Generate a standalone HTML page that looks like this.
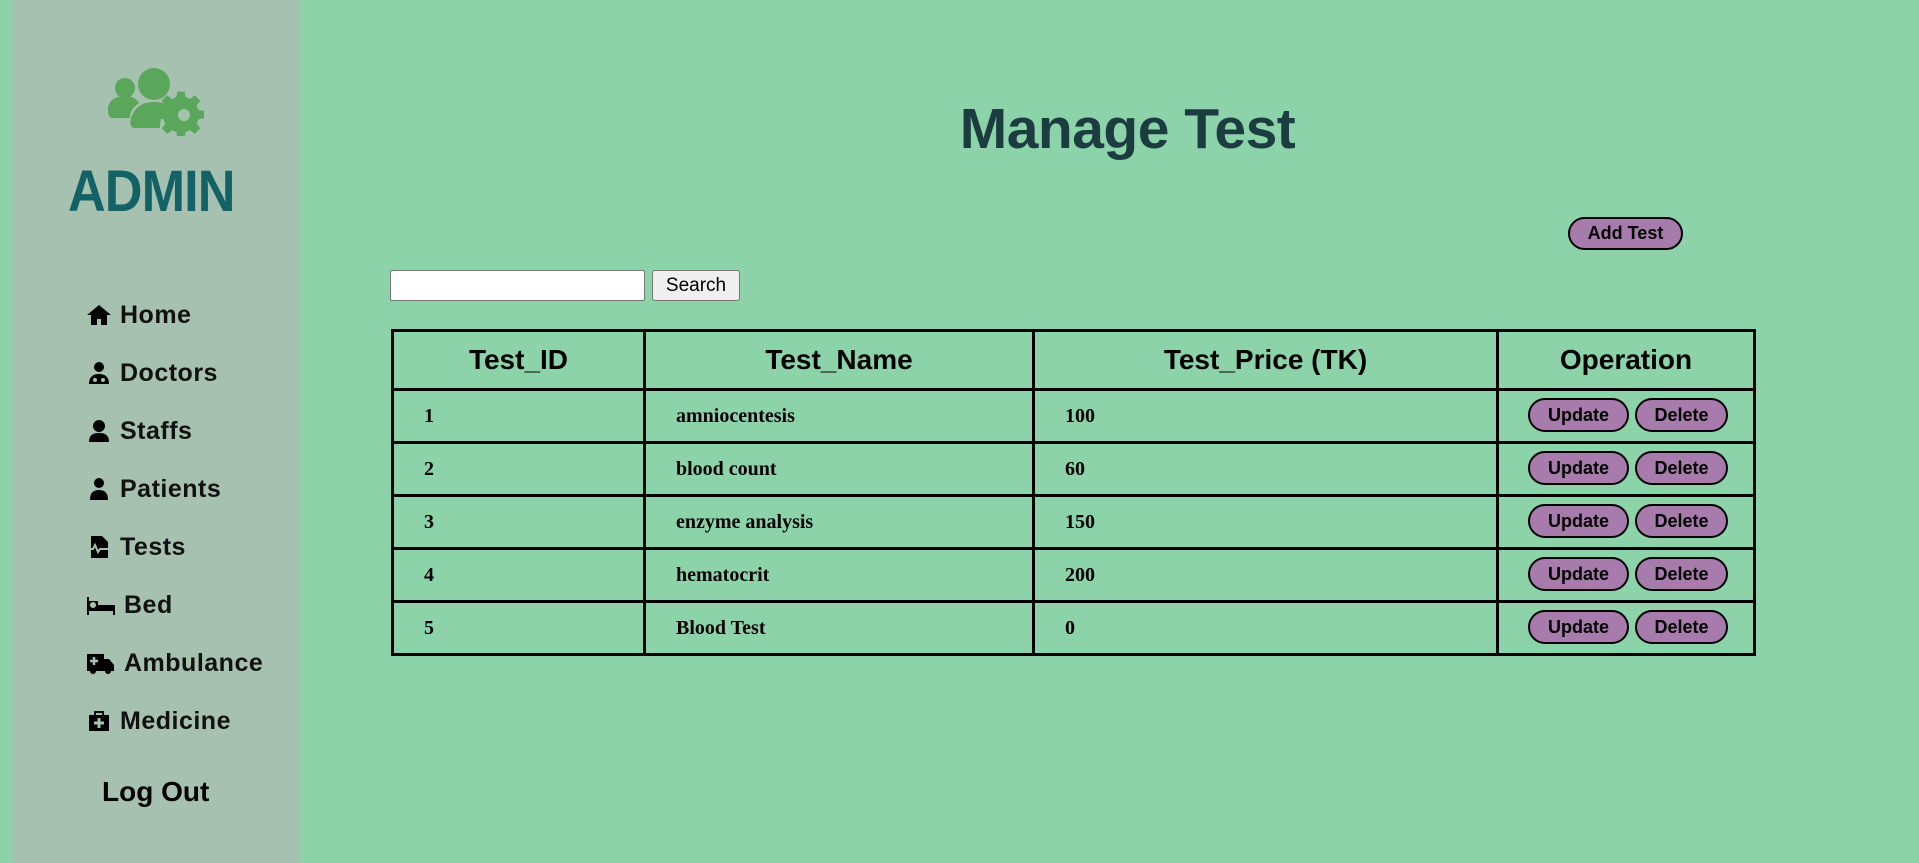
<!DOCTYPE html>
<html><head><meta charset="utf-8"><style>
*{margin:0;padding:0;box-sizing:border-box}
body{width:1919px;height:863px;background:#8dd3aa;position:relative;overflow:hidden;font-family:"Liberation Sans",sans-serif}
.side{position:absolute;left:12px;top:0;width:288px;height:863px;background:#a6c1af}
.abs{position:absolute}
.menu{position:absolute;left:86px;font-size:25px;font-weight:bold;color:#111;letter-spacing:0.5px;display:flex;align-items:center;height:30px}
.menu svg{width:26px;height:26px;margin-right:8px}
.btn{position:absolute;background:#a77bab;border:2px solid #000;border-radius:18px;font-weight:bold;font-size:18px;text-align:center;color:#000}
table{position:absolute;left:391px;top:329px;width:1365px;border-collapse:collapse}
td,th{border:3px solid #000}
th{height:59px;font-size:28px;font-weight:bold;font-family:"Liberation Sans",sans-serif}
td{height:53px;font-family:"Liberation Serif",serif;font-weight:bold;font-size:20px;padding-left:30px}
td.op{padding:0;position:relative}
</style></head><body>
<div class="side"></div>
<svg class="abs" style="left:108px;top:68px" width="96" height="68" viewBox="0 0 96 68">
<g fill="#5aa65a"><circle cx="17" cy="20" r="10"/><path d="M0 42c0-10 8-14 17-14s12 4 14 7c-6 4-9 9-9 15H4c-2 0-4-3-4-8z"/>
<circle cx="46" cy="16" r="16"/><path d="M22 60c0-18 10-26 24-26 9 0 14 2 17 6-8 4-11 10-11 20H26c-2 0-4-3-4-8z"/>
<path d="M71 30h8l1 6 5 2 5-4 6 6-4 5 2 5 6 1v8l-6 1-2 5 4 5-6 6-5-4-5 2-1 6h-8l-1-6-5-2-5 4-6-6 4-5-2-5-6-1v-8l6-1 2-5-4-5 6-6 5 4 5-2z" transform="translate(4,-4) scale(0.92)"/></g>
<circle cx="76" cy="47" r="6" fill="#a6c1af"/></svg>
<div class="abs" style="left:68px;top:158px;font-size:58px;font-weight:bold;color:#136265;letter-spacing:-1px;transform:scaleX(0.9);transform-origin:left">ADMIN</div>

<div class="menu" style="top:300px"><svg viewBox="0 0 26 24"><path d="M13 2L1 12h4v10h6v-6h4v6h6V12h4z"/></svg>Home</div>
<div class="menu" style="top:358px"><svg viewBox="0 0 26 24"><circle cx="13" cy="6" r="5"/><path d="M3 23c0-7 4-10 10-10s10 3 10 10z"/><circle cx="9" cy="19" r="2" fill="#a6c1af"/><circle cx="17" cy="19" r="2" fill="#a6c1af"/></svg>Doctors</div>
<div class="menu" style="top:416px"><svg viewBox="0 0 26 24"><circle cx="13" cy="7" r="6"/><path d="M3 23c0-7 4-9 10-9s10 2 10 9z"/></svg>Staffs</div>
<div class="menu" style="top:474px"><svg viewBox="0 0 26 24"><circle cx="13" cy="6" r="5"/><path d="M4 23c0-7 3-10 9-10s9 3 9 10z"/></svg>Patients</div>
<div class="menu" style="top:532px"><svg viewBox="0 0 26 24"><path d="M5 1h11l6 6v16H5z"/><path d="M1 14h6l2-4 3 7 2-3h8" stroke="#a6c1af" stroke-width="2" fill="none"/></svg>Tests</div>
<div class="menu" style="top:590px"><svg viewBox="0 0 30 24" style="width:30px"><path d="M1 4v18h2v-4h24v4h2V12H12V8H3V4z"/><circle cx="7" cy="12" r="3" fill="#a6c1af"/></svg>Bed</div>
<div class="menu" style="top:648px"><svg viewBox="0 0 30 24" style="width:30px"><path d="M1 3h17v5h5l5 6v6H1z"/><circle cx="7" cy="20" r="3"/><circle cx="22" cy="20" r="3"/><path d="M8 6v8M4 10h8" stroke="#a6c1af" stroke-width="2.5"/></svg>Ambulance</div>
<div class="menu" style="top:706px"><svg viewBox="0 0 26 24"><path d="M3 6h20v16H3z"/><path d="M9 6V3h8v3" stroke="#111" stroke-width="2" fill="none"/><path d="M13 9v10M8 14h10" stroke="#a6c1af" stroke-width="3"/></svg>Medicine</div>
<div class="abs" style="left:102px;top:776px;font-size:28px;font-weight:bold;color:#000;letter-spacing:0">Log Out</div>

<div class="abs" style="left:940px;top:96px;width:375px;text-align:center;font-size:57px;font-weight:bold;color:#1c3d40;letter-spacing:-0.5px">Manage Test</div>
<div class="btn" style="left:1568px;top:217px;width:115px;height:33px;line-height:29px">Add Test</div>

<div class="abs" style="left:390px;top:270px;width:255px;height:31px;background:#fff;border:1px solid #767676;border-radius:2px"></div>
<div class="abs" style="left:652px;top:270px;width:88px;height:31px;background:#efefef;border:1px solid #767676;border-radius:3px;font-size:19px;text-align:center;line-height:29px">Search</div>

<table>
<tr><th style="width:252px">Test_ID</th><th style="width:389px">Test_Name</th><th style="width:464px">Test_Price (TK)</th><th>Operation</th></tr>
<tr><td>1</td><td>amniocentesis</td><td>100</td><td class="op"></td></tr>
<tr><td>2</td><td>blood count</td><td>60</td><td class="op"></td></tr>
<tr><td>3</td><td>enzyme analysis</td><td>150</td><td class="op"></td></tr>
<tr><td>4</td><td>hematocrit</td><td>200</td><td class="op"></td></tr>
<tr><td>5</td><td>Blood Test</td><td>0</td><td class="op"></td></tr>
</table>
<div class="btn" style="left:1528px;top:398px;width:101px;height:34px;line-height:30px">Update</div><div class="btn" style="left:1635px;top:398px;width:93px;height:34px;line-height:30px">Delete</div>
<div class="btn" style="left:1528px;top:451px;width:101px;height:34px;line-height:30px">Update</div><div class="btn" style="left:1635px;top:451px;width:93px;height:34px;line-height:30px">Delete</div>
<div class="btn" style="left:1528px;top:504px;width:101px;height:34px;line-height:30px">Update</div><div class="btn" style="left:1635px;top:504px;width:93px;height:34px;line-height:30px">Delete</div>
<div class="btn" style="left:1528px;top:557px;width:101px;height:34px;line-height:30px">Update</div><div class="btn" style="left:1635px;top:557px;width:93px;height:34px;line-height:30px">Delete</div>
<div class="btn" style="left:1528px;top:610px;width:101px;height:34px;line-height:30px">Update</div><div class="btn" style="left:1635px;top:610px;width:93px;height:34px;line-height:30px">Delete</div>
</body></html>
